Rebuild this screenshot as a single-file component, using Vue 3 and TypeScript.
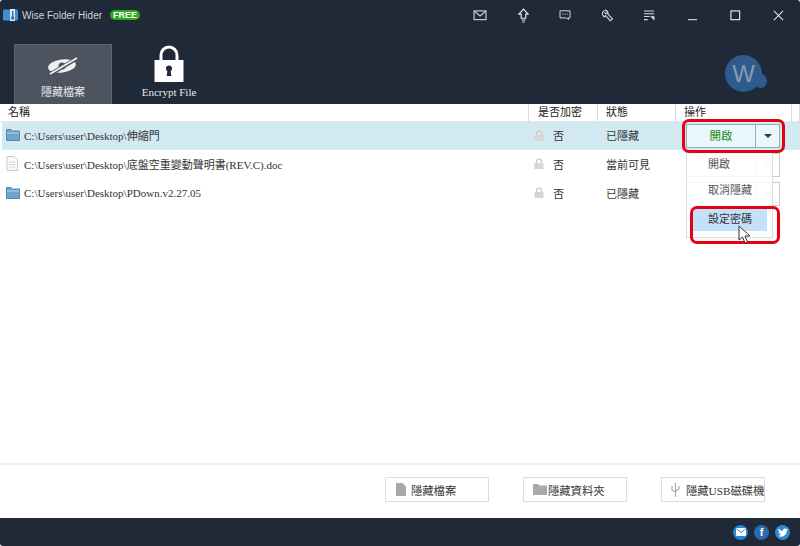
<script setup lang="ts">
interface Row { path: string; kind: 'folder' | 'file'; state: string; active?: boolean }
const rows: Row[] = [
  { path: 'C:\\Users\\user\\Desktop\\伸縮門', kind: 'folder', state: '已隱藏', active: true },
  { path: 'C:\\Users\\user\\Desktop\\底盤空重變動聲明書(REV.C).doc', kind: 'file', state: '當前可見' },
  { path: 'C:\\Users\\user\\Desktop\\PDown.v2.27.05', kind: 'folder', state: '已隱藏' },
]
</script>

<template>
  <div class="app">
    <header class="head">
      <div class="titlebar">
        <svg class="logo" width="15" height="12" viewBox="0 0 15 12">
          <rect x="0" y="0.500" width="15" height="11" rx="1" fill="#3d8fd6" />
          <rect x="7" y="0" width="5" height="12" fill="#dfe9f2" />
          <rect x="9" y="2" width="1.500" height="6" fill="#3d6f9c" />
          <circle cx="9.700" cy="9" r="1.700" fill="#3d6f9c" />
        </svg>
        <span class="appname">Wise Folder Hider</span>
        <span class="free">FREE</span>
        <div class="tools">
          <svg class="ti" viewBox="0 0 16 12" width="15" height="11"><rect x="1" y="1" width="13" height="9.500" fill="none" stroke="#d6dade" stroke-width="1.200"/><path d="M1.500 1.500l6 5 6-5" fill="none" stroke="#d6dade" stroke-width="1.200"/></svg>
          <svg class="ti" viewBox="0 0 12 16" width="11" height="15"><path d="M6 1L1 6.500h2.500V11h5V6.500H11z" fill="none" stroke="#e6e9ec" stroke-width="1.300"/><path d="M4 13h4M4.600 15h2.800" stroke="#e6e9ec" stroke-width="1.100"/></svg>
          <svg class="ti" viewBox="0 0 14 12" width="12" height="10"><path d="M1 1h12v8.500h-2v2l-2-2H1z" fill="none" stroke="#d6dade" stroke-width="1.200"/><path d="M4 5h1M6.500 5h1M9 5h1" stroke="#d6dade" stroke-width="1.400"/></svg>
          <svg class="ti" viewBox="0 0 14 14" width="13" height="13"><path d="M5 1.500A3.600 3.600 0 0 0 1.800 6.600L3.700 8.500 5 7l4.800 5.600 2.600-1.800-4.900-5.200A3.600 3.600 0 0 0 5.600 1.500L7 3.600 5.400 5.200 3.600 3.600" fill="none" stroke="#d6dade" stroke-width="1.100"/></svg>
          <svg class="ti" viewBox="0 0 12 12" width="11" height="11"><path d="M0 1h11M0 4h11M0 7h6M0 10.500h4" stroke="#d6dade" stroke-width="1.100"/><path d="M7.500 7h3.500v3.500z M7.500 7l3.500 3.500" fill="#d6dade" stroke="#d6dade" stroke-width=".8"/></svg>
          <svg class="ti win" viewBox="0 0 12 12" width="11" height="11"><path d="M1 10.500h10" stroke="#cfd3d8" stroke-width="1.300"/></svg>
          <svg class="ti win" viewBox="0 0 12 12" width="11" height="11"><rect x="1" y="1" width="9.500" height="9.500" fill="none" stroke="#dfe2e5" stroke-width="1.300"/></svg>
          <svg class="ti win" viewBox="0 0 12 12" width="11" height="11"><path d="M1 1l10 10M11 1L1 11" stroke="#e6e9ec" stroke-width="1.100"/></svg>
        </div>
      </div>
      <div class="tabsbar">
        <div class="tab on">
          <svg width="32" height="20" viewBox="0 0 32 20"><ellipse cx="15" cy="10" rx="14" ry="6.500" fill="#eef0f2" transform="rotate(-8 15 10)"/><circle cx="15" cy="10" r="3.500" fill="#4d545f"/><path d="M2 19L29 3" stroke="#4d545f" stroke-width="4"/><path d="M3 18L30 2" stroke="#eef0f2" stroke-width="2"/></svg>
          <span>隱藏檔案</span>
        </div>
        <div class="tab">
          <svg width="30" height="37" viewBox="0 0 30 37"><path d="M7 16V10a8 8 0 0 1 16 0v6" fill="none" stroke="#fff" stroke-width="3"/><rect x="0.500" y="15" width="29" height="22" fill="#fff"/><circle cx="15" cy="23.500" r="3" fill="#1f2937"/><path d="M13.500 25h3l.8 6h-4.600z" fill="#1f2937"/></svg>
          <span>Encrypt File</span>
        </div>
        <div class="avatar"><span class="wcircle">W</span><span class="wdot"></span></div>
      </div>
    </header>

    <div class="thead">
      <div class="c1">名稱</div>
      <div class="c2">是否加密</div>
      <div class="c3">狀態</div>
      <div class="c4">操作</div>
      <div class="c5"></div>
    </div>

    <main class="tbody">
      <div v-for="r in rows" :key="r.path" class="row" :class="{ active: r.active }">
        <div class="c1 pathcell">
          <svg v-if="r.kind === 'folder'" width="16" height="12" viewBox="0 0 16 12"><path d="M2.500 .5h4.500l1.500 1.500h7V11.500H2.500z" fill="#6fa5c8" stroke="#5688a8"/><rect x="3" y="3.500" width="12" height="1" fill="#b8d6e8"/></svg>
          <svg v-else width="16" height="15" viewBox="0 0 16 15"><path d="M3 .5h7L13.500 4v10.500H3z" fill="#fafafa" stroke="#c9c9c9"/><path d="M5 6h6.500M5 8.500h6.500M5 11h6.500" stroke="#d4d4d4"/></svg>
          <span>{{ r.path }}</span>
        </div>
        <div class="c2 enc">
          <svg width="10" height="11" viewBox="0 0 10 11"><path d="M2.500 5V3.500a2.500 2.500 0 0 1 5 0V5" fill="none" stroke="#c4c4c4" stroke-width="1.200"/><rect x=".5" y="5" width="9" height="6" fill="#d6d6d6"/></svg>
          <span>否</span>
        </div>
        <div class="c3">{{ r.state }}</div>
        <div class="c4 actcell">
          <div class="split">
            <span class="open">{{ r.active ? '開啟' : '' }}</span>
            <span class="drop"><i></i></span>
          </div>
        </div>
      </div>
    </main>

    <div class="menu">
      <div class="mi">開啟</div>
      <div class="mi">取消隱藏</div>
      <div class="mi hover">設定密碼</div>
    </div>
    <div class="mark m1"></div>
    <div class="mark m2"></div>
    <svg class="cursor" width="14" height="20" viewBox="0 0 14 20"><path d="M1 1v14l3.500-3 2.500 6 2.500-1-2.500-6h5z" fill="#fff" stroke="#333" stroke-width="1"/></svg>

    <div class="actions">
      <button class="btn">
        <svg width="10" height="13" viewBox="0 0 10 13"><path d="M0 0h6.500L10 3.500V13H0z" fill="#a9a9a9"/></svg>
        <span>隱藏檔案</span>
      </button>
      <button class="btn">
        <svg width="14" height="11" viewBox="0 0 14 11"><path d="M0 0h5l1.500 1.500H14V11H0z" fill="#a9a9a9"/></svg>
        <span>隱藏資料夾</span>
      </button>
      <button class="btn">
        <svg width="9" height="14" viewBox="0 0 9 14"><path d="M4.500 0v14M1 3v4l3.500 2M8 3v3L4.500 8" fill="none" stroke="#a9a9a9" stroke-width="1.200"/></svg>
        <span>隱藏USB磁碟機</span>
      </button>
    </div>

    <footer class="foot">
      <span class="soc mail"><svg width="10" height="8" viewBox="0 0 10 8"><rect width="10" height="8" rx="1" fill="#fff"/><path d="M.5.800L5 4.500 9.500.800" fill="none" stroke="#1f86d8"/></svg></span>
      <span class="soc fb">f</span>
      <span class="soc tw"><svg width="10" height="9" viewBox="0 0 24 20"><path d="M24 2.400a10 10 0 0 1-2.800.8A5 5 0 0 0 23.300.500a10 10 0 0 1-3.100 1.200A5 5 0 0 0 11.800 6.200 14 14 0 0 1 1.700 1a5 5 0 0 0 1.500 6.600 5 5 0 0 1-2.200-.6 5 5 0 0 0 3.900 4.900 5 5 0 0 1-2.200.1 5 5 0 0 0 4.600 3.400A10 10 0 0 1 0 17.500 14 14 0 0 0 21.600 5a10 10 0 0 0 2.400-2.600z" fill="#fff"/></svg></span>
    </footer>
  </div>
</template>

<style scoped>
.app {
  position: relative;
  width: 800px;
  height: 546px;
  display: flex;
  flex-direction: column;
  background: #fff;
  overflow: hidden;
  border-radius: 3px;
  font-family: "Liberation Serif", "Noto Sans CJK TC", serif;
  font-size: 11px;
  color: #333;
}
.head { height: 104px; background: #1f2937; display: flex; flex-direction: column; flex: none; }
.titlebar { height: 30px; display: flex; align-items: center; padding-left: 3px; }
.logo { flex: none; }
.appname { margin-left: 4px; font-family: "Liberation Sans", sans-serif; font-size: 10px; color: #cfd4da; }
.free {
  margin-left: 8px; height: 10px; width: 30px; border-radius: 5px; background: #2aa81a; color: #fff;
  font: bold 9px/10px "Liberation Sans", sans-serif; text-align: center;
}
.tools { margin-left: auto; display: flex; align-items: center; padding-right: 16px; }
.ti { margin-left: 30px; flex: none; }
.win { margin-left: 32px; }
.tabsbar { flex: 1; position: relative; display: flex; align-items: flex-end; padding-left: 14px; }
.tab {
  width: 98px; height: 60px; display: flex; flex-direction: column; align-items: center; justify-content: flex-end;
  color: #e8eaec; font-size: 11px; padding-bottom: 4px; box-sizing: border-box; gap: 3px;
}
.tab span { line-height: 15px; }
.tab.on { background: #4d545f; border: 1px solid #5d646e; border-bottom: 0; padding-top: 8px; gap: 9px; }
.tab:not(.on) { margin-left: 8px; }
.avatar { position: absolute; right: 33px; top: 25px; width: 42px; height: 37px; }
.wcircle {
  position: absolute; left: 0; top: 0; width: 37px; height: 37px; border-radius: 50%; background: #2d5b8e; color: #8a9bb0;
  font: 24px/37px "Liberation Sans", sans-serif; text-align: center;
}
.wdot { position: absolute; right: 0; top: 19px; width: 13px; height: 14px; border-radius: 50%; background: #2d5b8e; }
.thead {
  height: 18px; display: flex; flex: none; background: #fff; border-bottom: 1px solid #e6e6e6; box-sizing: border-box; line-height: 16px; font-size: 11px; color: #222;
}
.thead > div { border-right: 1px solid #d8d8d8; box-sizing: border-box; }
.c1 { width: 529px; padding-left: 8px; box-sizing: border-box; }
.c2 { width: 69px; padding-left: 9px; box-sizing: border-box; }
.c3 { width: 78px; padding-left: 8px; box-sizing: border-box; }
.c4 { width: 116px; padding-left: 8px; box-sizing: border-box; }
.c5 { width: 8px; }
.tbody { flex: 1; }
.row { height: 29px; display: flex; align-items: center; font-size: 11px; margin-left: 2px; }
.row.active { background: #d3e9f2; height: 28px; }
.row .c1 { width: 527px; padding-left: 2px; }
.pathcell, .enc, .row .c3 { padding-bottom: 2px; }
.pathcell { display: flex; align-items: center; gap: 4px; }
.pathcell svg { flex: none; }
.enc { display: flex; align-items: center; gap: 9px; padding-left: 5px; }
.actcell { padding-left: 10px; }
.split {
  width: 94px; height: 24px; display: flex; border: 1px solid #ccc; background: #fff; box-sizing: border-box;
}
.open { flex: 1; text-align: center; line-height: 22px; color: #777; }
.drop { width: 23px; border-left: 1px solid #ddd; display: flex; align-items: center; justify-content: center; }
.drop i { width: 0; height: 0; border: 4px solid transparent; border-top-color: #ddd; border-bottom: 0; }
.active .split { background: #eaf7fb; border-color: #9ab; }
.active .open { color: #1d8a20; font-size: 11.500px; }
.active .drop { border-left-color: #9ab; }
.active .drop i { border-top-color: #333; }
.menu {
  position: absolute; left: 686px; top: 150px; width: 87px; height: 88px; background: rgba(255,255,255,.82);
  border: 1px solid #ddd; border-top: 0; box-sizing: border-box; font-size: 11px; color: #555; padding-left: 21px;
}
.mi { height: 26px; line-height: 28px; }
.mi.hover { background: #c5e1f9; height: 23px; margin: 6px 5px 0 -16px; padding-left: 16px; line-height: 23px; color: #333; }
.mark { position: absolute; border: 3px solid #e60012; border-radius: 7px; box-sizing: border-box; }
.m1 { left: 682px; top: 119px; width: 103px; height: 34px; }
.m2 { left: 690px; top: 206px; width: 90px; height: 38px; }
.cursor { position: absolute; left: 738px; top: 225px; }
.actions {
  height: 55px; flex: none; display: flex; align-items: center; justify-content: flex-end; gap: 34px; padding: 0 35px 4px 0; border-top: 2px solid #eee; box-sizing: border-box;
}
.btn {
  width: 104px; height: 25px; padding: 0 0 0 10px; display: flex; align-items: center; gap: 5px; background: #fff; border: 1px solid #ddd;
  font: 11.300px "Liberation Serif", "Noto Sans CJK TC", serif; color: #333; box-sizing: border-box; flex: none;
}
.btn svg { flex: none; }
.btn:nth-child(2) { padding-left: 9px; gap: 1px; }
.btn:nth-child(3) { padding-left: 9px; gap: 6px; white-space: nowrap; }
.foot {
  height: 28px; background: #1f2937; display: flex; align-items: center; justify-content: flex-end; gap: 6px; padding-right: 10px; flex: none;
}
.soc { width: 15px; height: 15px; border-radius: 50%; display: flex; align-items: center; justify-content: center; color: #fff; font: bold 11px "Liberation Sans", sans-serif; }
.mail { background: #1f86d8; }
.fb { background: #2a6ab0; }
.tw { background: #2d8ad6; }
</style>
